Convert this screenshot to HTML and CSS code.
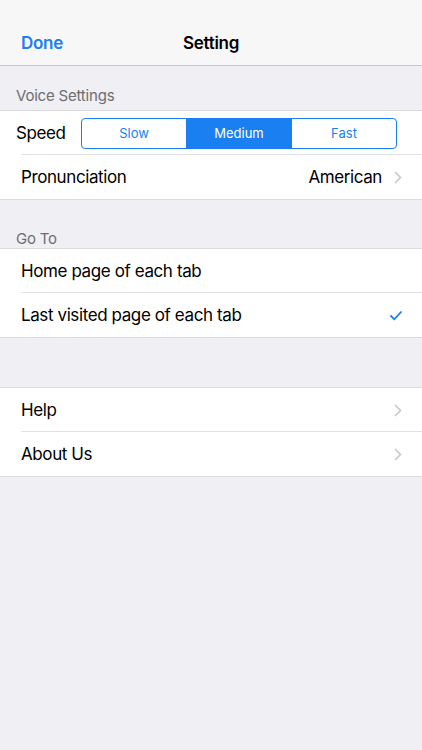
FILE: index.html
```html
<!DOCTYPE html>
<html lang="en">
<head>
    <meta charset="UTF-8">
    <meta name="viewport" content="width=device-width, initial-scale=1.0">
    <title>Setting</title>
    <link rel="stylesheet" href="styles.css">
</head>
<body>

    <div class="navbar">
        <span class="nav-done">Done</span>
        <span class="nav-title">Setting</span>
    </div>

    <div class="section-header">Voice Settings</div>
    <div class="group">
        <div class="row speed-row">
            <span class="row-label">Speed</span>
            <div class="segmented">
                <span class="segment">Slow</span>
                <span class="segment active">Medium</span>
                <span class="segment">Fast</span>
            </div>
        </div>
        <div class="row">
            <span class="row-label">Pronunciation</span>
            <span class="row-value">American</span>
            <svg class="chevron" width="8" height="13" viewBox="0 0 8 13"><path d="M1 1l5.5 5.5L1 12" fill="none" stroke="#c7c7cc" stroke-width="1.6"/></svg>
        </div>
    </div>

    <div class="section-header tall">Go To</div>
    <div class="group">
        <div class="row">
            <span class="row-label">Home page of each tab</span>
        </div>
        <div class="row">
            <span class="row-label">Last visited page of each tab</span>
            <svg class="check" width="14" height="11" viewBox="0 0 14 11"><path d="M1.5 5.5l3.8 3.8L12.5 1.5" fill="none" stroke="#1a7ff0" stroke-width="1.8"/></svg>
        </div>
    </div>

    <div class="spacer"></div>
    <div class="group">
        <div class="row">
            <span class="row-label">Help</span>
            <svg class="chevron" width="8" height="13" viewBox="0 0 8 13"><path d="M1 1l5.5 5.5L1 12" fill="none" stroke="#c7c7cc" stroke-width="1.6"/></svg>
        </div>
        <div class="row">
            <span class="row-label">About Us</span>
            <svg class="chevron" width="8" height="13" viewBox="0 0 8 13"><path d="M1 1l5.5 5.5L1 12" fill="none" stroke="#c7c7cc" stroke-width="1.6"/></svg>
        </div>
    </div>

</body>
</html>
```

FILE: styles.css
```css
body {
    margin: 0;
    font-family: Inter, "Liberation Sans", sans-serif;
    background-color: #efeff4;
    color: #000;
    height: 750px;
}
.navbar {
    height: 66px;
    box-sizing: border-box;
    padding-top: 21px;
    background-color: #f7f7f8;
    border-bottom: 1px solid #c8c7cc;
    display: flex;
    align-items: center;
    justify-content: center;
    position: relative;
}
.nav-done {
    position: absolute;
    left: 21px;
    top: 33px;
    color: #1a7ff0;
    font-size: 17px;
    font-weight: 600;
    letter-spacing: -0.3px;
}
.nav-title {
    font-size: 17px;
    font-weight: 600;
    letter-spacing: -0.3px;
}
.section-header {
    height: 44px;
    box-sizing: border-box;
    padding: 0 16px 5px;
    display: flex;
    align-items: flex-end;
    font-size: 15px;
    letter-spacing: -0.2px;
    color: #6d6d72;
}
.section-header.tall {
    height: 48px;
    padding-bottom: 0;
}
.group {
    background-color: #fff;
    border-top: 1px solid #dcdce0;
    border-bottom: 1px solid #dcdce0;
}
.row {
    height: 44px;
    display: flex;
    align-items: center;
    padding: 0 21px;
    position: relative;
    font-size: 17px;
    letter-spacing: -0.4px;
}
.row + .row::before {
    content: "";
    position: absolute;
    left: 21px;
    right: 0;
    top: -1px;
    border-top: 1px solid #e1e1e4;
}
.row-label {
    flex: 1;
}
.speed-row {
    padding: 0 25px 0 16px;
}
.speed-row .row-label {
    flex: none;
    width: 65px;
}
.segmented {
    flex: 1;
    height: 29px;
    display: flex;
    border: 1px solid #1a7ff0;
    border-radius: 4px;
    overflow: hidden;
    letter-spacing: 0;
}
.segment {
    flex: 1;
    display: flex;
    align-items: center;
    justify-content: center;
    font-size: 13px;
    color: #1a7ff0;
}
.segment + .segment {
    border-left: 1px solid #1a7ff0;
}
.segment.active {
    background-color: #1a7ff0;
    color: #fff;
}
.row-value {
    margin-right: 12px;
}
.chevron {
    margin-right: -1px;
}
.check {
    margin-right: -2px;
}
.spacer {
    height: 49px;
}
```
